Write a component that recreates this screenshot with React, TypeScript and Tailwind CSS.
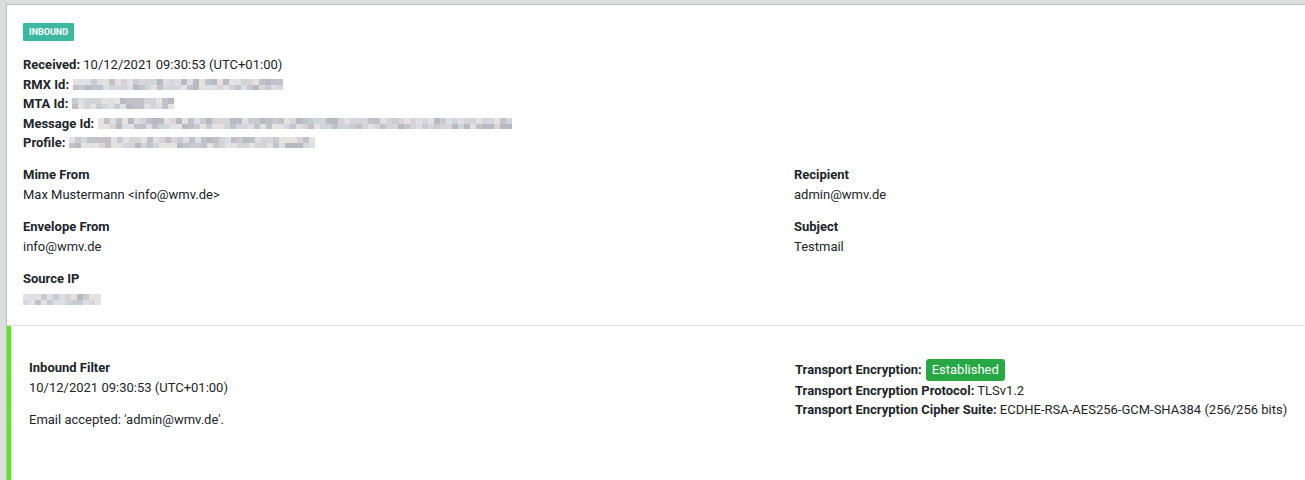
import React from "react";

// pixelated placeholder for redacted values
function Mosaic({ width, seed }: { width: number; seed: number }) {
  const cols = Math.floor(width / 6);
  const palette = ["#d6d6dc", "#c9cbd2", "#e2e2e6", "#bfc3cc", "#d9d3d8", "#cfd6da", "#e6e3dc", "#b9b9c2", "#dcdfe6", "#c4c0c8"];
  let s = seed;
  const next = () => {
    s = (s * 9301 + 49297) % 233280;
    return palette[Math.floor((s / 233280) * palette.length)];
  };
  const top: string[] = [];
  const bottom: string[] = [];
  for (let i = 0; i < cols; i++) {
    top.push(next());
    bottom.push(next());
  }
  return (
    <span className="inline-flex flex-col align-middle">
      <span className="flex">
        {top.map((c, i) => (
          <span key={i} className="w-[6px] h-[6px]" style={{ background: c }} />
        ))}
      </span>
      <span className="flex">
        {bottom.map((c, i) => (
          <span key={i} className="w-[6px] h-[5px]" style={{ background: c }} />
        ))}
      </span>
    </span>
  );
}

const meta = [
  { label: "RMX Id:", width: 214, seed: 11 },
  { label: "MTA Id:", width: 106, seed: 23 },
  { label: "Message Id:", width: 418, seed: 37 },
  { label: "Profile:", width: 248, seed: 51 },
];

function Field({ label, children, last }: { label: string; children: React.ReactNode; last?: boolean }) {
  return (
    <div className={last ? "" : "mb-3"}>
      <div className="font-bold leading-[20px]">{label}</div>
      <div className="leading-[20px]">{children}</div>
    </div>
  );
}

export default function App() {
  return (
    <div
      className="w-[1305px] h-[480px] overflow-hidden bg-[#dcdede] text-[13px] text-[#212529]"
      style={{ fontFamily: "Roboto, 'Liberation Sans', sans-serif" }}
    >
      <div className="ml-[6px] mt-[4px] h-full border-l border-t border-[#bdbdbd] bg-white">
        {/* Header section */}
        <div className="px-4 pt-[18px] pb-[16px] border-b border-[#dedede]">
          <div className="w-fit bg-[#3db8a0] text-white text-[9px] font-bold px-[6px] leading-[18px] rounded-[1px]">
            INBOUND
          </div>

          <div className="mt-[14px] leading-[19.5px]">
            <div>
              <span className="font-bold">Received:</span> 10/12/2021 09:30:53 (UTC+01:00)
            </div>
            {meta.map((m) => (
              <div key={m.label} className="flex items-center gap-[4px]">
                <span className="font-bold">{m.label}</span>
                <Mosaic width={m.width} seed={m.seed} />
              </div>
            ))}
          </div>

          <div className="flex mt-[12px]">
            <div className="w-[771px]">
              <Field label="Mime From">Max Mustermann &lt;info@wmv.de&gt;</Field>
              <Field label="Envelope From">info@wmv.de</Field>
              <Field label="Source IP" last>
                <Mosaic width={78} seed={77} />
              </Field>
            </div>
            <div>
              <Field label="Recipient">admin@wmv.de</Field>
              <Field label="Subject">Testmail</Field>
            </div>
          </div>
        </div>

        {/* Event section */}
        <div className="flex h-full border-l-4 border-[#4cf01a]">
          <div className="w-[784px] pl-[18px] pt-[32px]">
            <div className="font-bold leading-[20px]">Inbound Filter</div>
            <div className="leading-[20px]">10/12/2021 09:30:53 (UTC+01:00)</div>
            <div className="mt-[12px] leading-[20px]">Email accepted: 'admin@wmv.de'.</div>
          </div>
          <div className="pt-[33px] leading-[19.5px]">
            <div className="flex items-center gap-[4px] h-[22px]">
              <span className="font-bold">Transport Encryption:</span>
              <span className="bg-[#28a745] text-white text-[13px] px-[6px] leading-[22px] rounded-[3px]">
                Established
              </span>
            </div>
            <div>
              <span className="font-bold">Transport Encryption Protocol:</span> TLSv1.2
            </div>
            <div>
              <span className="font-bold">Transport Encryption Cipher Suite:</span> ECDHE-RSA-AES256-GCM-SHA384 (256/256 bits)
            </div>
          </div>
        </div>
      </div>
    </div>
  );
}
